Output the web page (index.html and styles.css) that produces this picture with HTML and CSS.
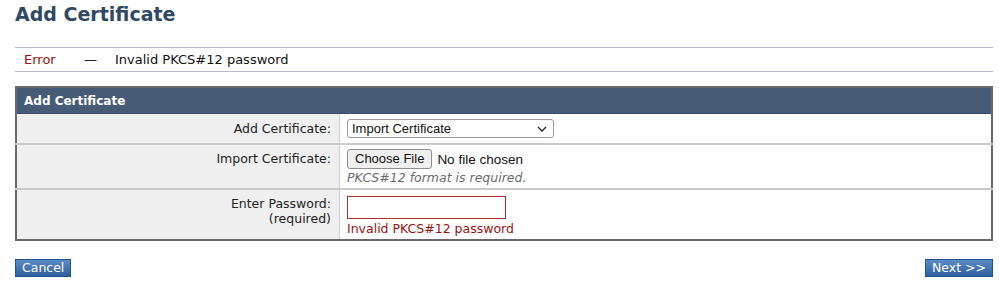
FILE: index.html
```html
<!DOCTYPE html>
<html lang="en">
<head>
    <meta charset="UTF-8">
    <title>Add Certificate</title>
    <link rel="stylesheet" href="styles.css">
</head>
<body>
    <div id="page">
        <h1>Add Certificate</h1>

        <!-- Error notice -->
        <div class="notice">
            <span class="notice-type">Error</span>
            <span class="notice-dash">&mdash;</span>
            <span class="notice-text">Invalid PKCS#12 password</span>
        </div>

        <table class="form-table">
            <tr>
                <th colspan="2">Add Certificate</th>
            </tr>
            <tr class="row-first">
                <td class="label label-middle">Add Certificate:</td>
                <td class="value">
                    <select class="select">
                        <option>Import Certificate</option>
                    </select>
                </td>
            </tr>
            <tr>
                <td class="label">Import Certificate:</td>
                <td class="value">
                    <div class="file-line">
                        <span class="file-button">Choose File</span>
                        <span class="file-name">No file chosen</span>
                    </div>
                    <div class="hint">PKCS#12 format is required.</div>
                </td>
            </tr>
            <tr>
                <td class="label">Enter Password:<br>(required)</td>
                <td class="value">
                    <input type="password" class="password">
                    <div class="field-error">Invalid PKCS#12 password</div>
                </td>
            </tr>
        </table>

        <div class="actions">
            <button class="btn">Cancel</button>
            <button class="btn">Next &gt;&gt;</button>
        </div>
    </div>
</body>
</html>
```

FILE: styles.css
```css
body {
    margin: 0;
    font-family: "DejaVu Sans", Verdana, sans-serif;
    font-size: 12.5px;
    color: #222;
    background: #fff;
}
#page {
    padding: 0 6px 0 15px;
}
h1 {
    margin: 0;
    padding-top: 3px;
    font-size: 19px;
    line-height: 22px;
    color: #2f4964;
}
.notice {
    display: flex;
    align-items: center;
    margin-top: 22px;
    height: 23px;
    padding-left: 9px;
    border-top: 1px solid #b9bacd;
    border-bottom: 1px solid #b9bacd;
    font-size: 13px;
}
.notice-type {
    width: 60px;
    color: #9a1111;
}
.notice-dash {
    width: 31px;
}
.notice-text {
    color: #111;
}
.form-table {
    width: 100%;
    margin-top: 14px;
    border-collapse: collapse;
    border: 2px solid #6a6a6a;
}
.form-table th {
    height: 25px;
    padding: 0 7px;
    background-color: #465b75;
    color: #fff;
    font-size: 12px;
    text-align: left;
    border-bottom: 1px solid #3a4d64;
}
.form-table td {
    border-top: 2px solid #cacaca;
}
.row-first td {
    border-top: none;
}
.label {
    width: 306px;
    padding: 6px 8px 0 8px;
    background-color: #efefef;
    border-right: 1px solid #cfcfcf;
    text-align: right;
    vertical-align: top;
    line-height: 15px;
}
.label-middle {
    vertical-align: middle;
    padding-top: 0;
}
.value {
    padding: 4px 8px 3px 7px;
    vertical-align: top;
    line-height: 15px;
}
.row-first .value {
    padding: 5px 8px 5px 7px;
}
.select {
    display: block;
    width: 207px;
    height: 19px;
    padding: 0 4px;
    border: 1px solid #9a9a9a;
    border-radius: 3px;
    background: #fff url("data:image/svg+xml,%3Csvg xmlns='http://www.w3.org/2000/svg' width='10' height='6'%3E%3Cpath d='M1 1l4 4 4-4' fill='none' stroke='%23222' stroke-width='1.3'/%3E%3C/svg%3E") no-repeat right 6px center;
    font-family: "Liberation Sans", Arial, sans-serif;
    font-size: 13px;
    color: #111;
    appearance: none;
}
.file-line {
    display: flex;
    align-items: center;
    height: 20px;
}
.file-button {
    display: inline-block;
    height: 18px;
    line-height: 18px;
    padding: 0 7px;
    border: 1px solid #8f8f8f;
    border-radius: 3px;
    background-color: #efefef;
    font-family: "Liberation Sans", Arial, sans-serif;
    font-size: 13px;
    color: #111;
}
.file-name {
    margin-left: 5px;
    font-family: "Liberation Sans", Arial, sans-serif;
    font-size: 13.5px;
    color: #111;
}
.hint {
    margin-top: 1px;
    font-style: italic;
    color: #6b6b6b;
    font-size: 12.5px;
}
.password {
    display: block;
    width: 159px;
    height: 23px;
    margin: 2px 0 0 0;
    box-sizing: border-box;
    border: 1px solid #a83030;
    outline: none;
    padding: 0 3px;
}
.field-error {
    margin-top: 2px;
    color: #9a1111;
    font-size: 12.5px;
}
.actions {
    display: flex;
    justify-content: space-between;
    margin-top: 18px;
}
.btn {
    height: 18px;
    padding: 0 6px;
    border: 1px solid #22548d;
    border-radius: 0;
    background: linear-gradient(#5b8bc6, #2f619e);
    color: #fff;
    font-family: "DejaVu Sans", Verdana, sans-serif;
    font-size: 12.5px;
    line-height: 16px;
}
```
